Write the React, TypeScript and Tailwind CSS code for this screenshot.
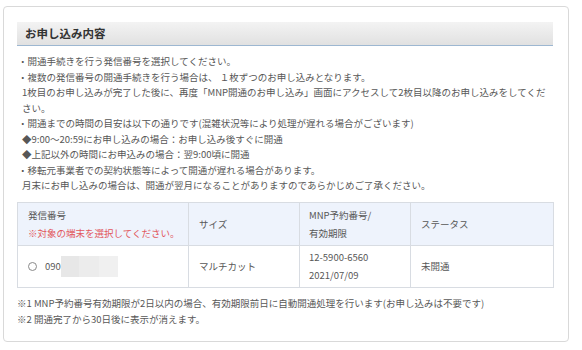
const notes: { text: string; indent?: boolean }[] = [
  { text: "・開通手続きを行う発信番号を選択してください。" },
  { text: "・複数の発信番号の開通手続きを行う場合は、 １枚ずつのお申し込みとなります。" },
  { text: "1枚目のお申し込みが完了した後に、再度「MNP開通のお申し込み」画面にアクセスして2枚目以降のお申し込みをしてくだ", indent: true },
  { text: "さい。", indent: true },
  { text: "・開通までの時間の目安は以下の通りです(混雑状況等により処理が遅れる場合がございます)" },
  { text: "◆9:00～20:59にお申し込みの場合：お申し込み後すぐに開通", indent: true },
  { text: "◆上記以外の時間にお申込みの場合：翌9:00頃に開通", indent: true },
  { text: "・移転元事業者での契約状態等によって開通が遅れる場合があります。" },
  { text: "月末にお申し込みの場合は、開通が翌月になることがありますのであらかじめご了承ください。", indent: true },
];

export default function App() {
  return (
    <div className="pt-[6px] pl-[3px] bg-white min-h-[350px] font-['Noto_Sans_CJK_JP','Noto_Sans',sans-serif] text-[#575757]">
      <div className="w-[566px] border border-[#d9d9d9] rounded-[4px] pt-[15px] pl-[13px] pr-[15px] pb-[14px]">
        {/* Section header */}
        <div className="h-[24px] flex items-center pl-[8px] bg-gradient-to-b from-[#f3f3f3] to-[#e1e1e1] border-b border-[#9db7d1]">
          <h2 className="text-[11.5px] font-bold text-[#333] leading-none">お申し込み内容</h2>
        </div>

        {/* Notes */}
        <div className="mt-[8px] text-[9.5px] leading-[15.5px] whitespace-nowrap pl-[1px]">
          {notes.map((n, i) => (
            <div key={i} className={n.indent ? "pl-[4px]" : ""}>
              {n.text}
            </div>
          ))}
        </div>

        {/* Table */}
        <table className="mt-[8px] w-[536px] table-fixed border-collapse text-[9.5px] leading-[18px]">
          <colgroup>
            <col className="w-[171px]" />
            <col className="w-[111px]" />
            <col className="w-[111px]" />
            <col className="w-[143px]" />
          </colgroup>
          <thead>
            <tr className="h-[43px] bg-[#eef3fc]">
              <th className="border border-[#d8dce2] pl-[10px] text-left font-normal align-middle">
                <div>発信番号</div>
                <div className="text-[#e2585c]">※対象の端末を選択してください。</div>
              </th>
              <th className="border border-[#d8dce2] pl-[10px] text-left font-normal align-middle">サイズ</th>
              <th className="border border-[#d8dce2] pl-[9px] text-left font-normal align-middle">
                <div>MNP予約番号/</div>
                <div>有効期限</div>
              </th>
              <th className="border border-[#d8dce2] pl-[10px] text-left font-normal align-middle">ステータス</th>
            </tr>
          </thead>
          <tbody>
            <tr className="h-[42px]">
              <td className="border border-[#d8dce2] pl-[10px] align-middle">
                <div className="flex items-center">
                  <span className="w-[9px] h-[9px] rounded-full border border-[#8a8a8a] bg-white shrink-0" />
                  <span className="ml-[8px]">090</span>
                  <span className="flex h-[21px] w-[57px]">
                    <span className="w-[18px] bg-[#e7e7e7]" />
                    <span className="w-[20px] bg-[#ececec]" />
                    <span className="w-[19px] bg-[#f0f0f0]" />
                  </span>
                </div>
              </td>
              <td className="border border-[#d8dce2] pl-[10px] align-middle">マルチカット</td>
              <td className="border border-[#d8dce2] pl-[9px] align-middle">
                <div>12-5900-6560</div>
                <div>2021/07/09</div>
              </td>
              <td className="border border-[#d8dce2] pl-[10px] align-middle">未開通</td>
            </tr>
          </tbody>
        </table>

        {/* Footnotes */}
        <div className="mt-[7px] text-[9.5px] leading-[16px] whitespace-nowrap">
          <div>※1 MNP予約番号有効期限が2日以内の場合、有効期限前日に自動開通処理を行います(お申し込みは不要です)</div>
          <div>※2 開通完了から30日後に表示が消えます。</div>
        </div>
      </div>
    </div>
  );
}
